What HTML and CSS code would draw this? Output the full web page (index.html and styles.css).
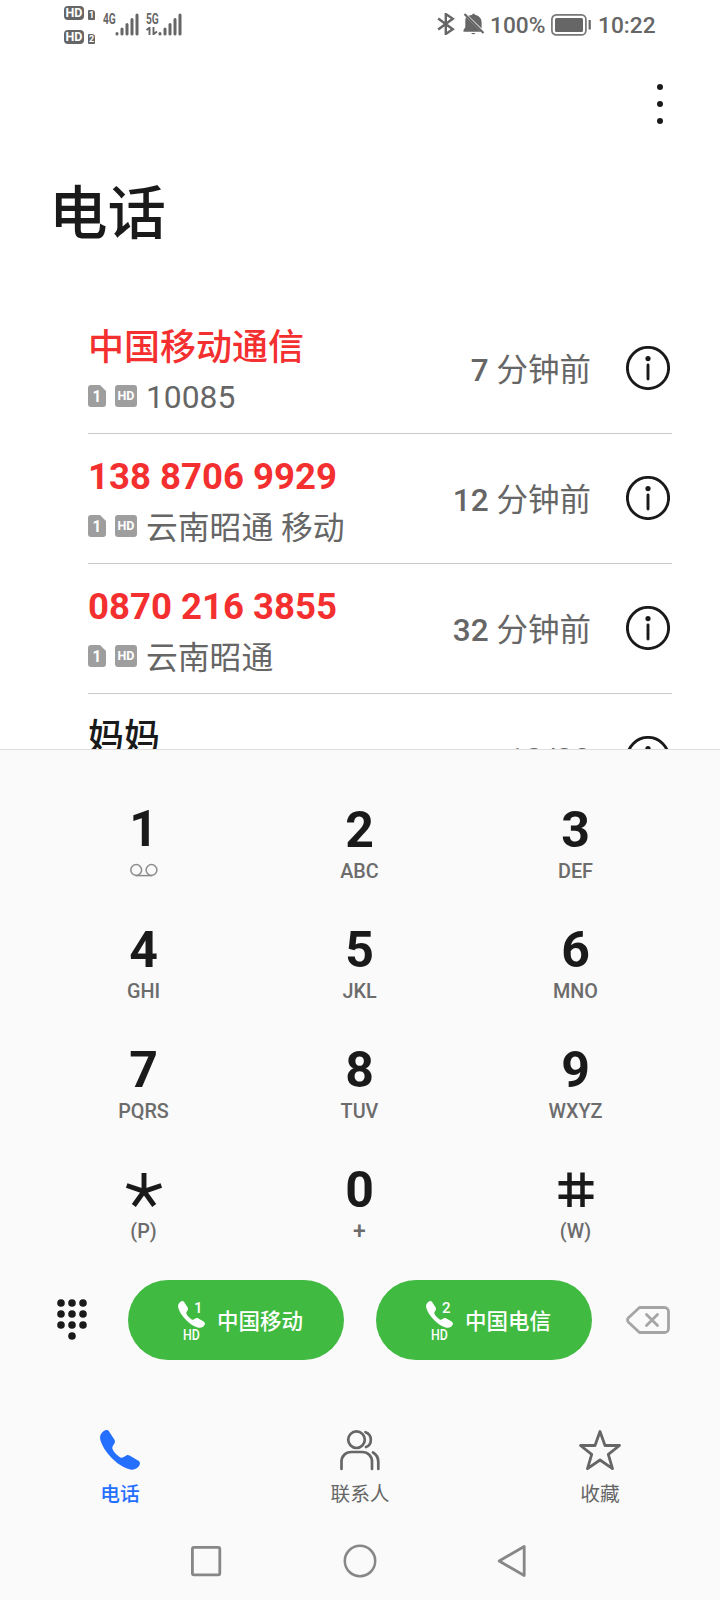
FILE: index.html
```html
<!DOCTYPE html>
<html lang="zh-CN">
<head>
<meta charset="utf-8">
<title>电话</title>
<link rel="stylesheet" href="styles.css">
</head>
<body>
<svg class="defs" width="0" height="0" aria-hidden="true">
  <symbol id="info" viewBox="0 0 44 44">
    <circle cx="22" cy="22" r="20.6" fill="none" stroke="#1a1a1a" stroke-width="2.9"/>
    <circle cx="22" cy="12.6" r="2.6" fill="#1a1a1a"/>
    <path d="M22 19v14" stroke="#1a1a1a" stroke-width="2.9" stroke-linecap="round"/>
  </symbol>
  <symbol id="handset" viewBox="0 0 40 40">
    <path d="M5.3.3C6.800-.2 8.200.2 9.100 1.500L14.300 9.600C15.300 11.100 15.100 12.500 14.100 14.100C12.800 16 11.900 17.200 12.500 19C13.900 22.200 17.600 26 20.900 27.700C22.400 28.100 24.400 26.300 26.400 25.400C27.500 24.900 28.500 25 29.600 25.600L38 30.500C39.700 31.500 40.300 33 39.700 34.800C38.300 38.300 34.300 40.300 30.300 39.500C16.800 36.300 3 21 .2 9.300C-.5 5.300 1.800 1.500 5.300.3Z"/>
  </symbol>
  <symbol id="bars" viewBox="0 0 24 24">
    <path d="M2 21.500v.500M7 17v5M12 12.500v9.500M17 7.500v14.500M22 3v19" stroke="#666" stroke-width="3" stroke-linecap="round"/>
  </symbol>
  <symbol id="sim" viewBox="0 0 18 22">
    <path d="M3 0H12L18 6V19a3 3 0 0 1-3 3H3a3 3 0 0 1-3-3V3a3 3 0 0 1 3-3Z" fill="#9e9e9e"/>
  </symbol>
</svg>
<div class="screen">
  <header class="status">
    <div class="status-left">
      <div class="hd-stack">
        <div class="hd-line"><span class="hd-badge">HD</span><span class="hd-num">1</span></div>
        <div class="hd-line"><span class="hd-badge">HD</span><span class="hd-num">2</span></div>
      </div>
      <div class="signal first"><span class="gen">4G</span><svg class="bars" width="24" height="24"><use href="#bars"/></svg></div>
      <div class="signal"><div class="gen-col"><span class="gen">5G</span><svg width="12" height="8" viewBox="0 0 12 8"><path d="M.5 3L3.500 .8V8M7.500 0V7.200L11 4.500" fill="none" stroke="#666" stroke-width="1.900"/></svg></div><svg class="bars" width="24" height="24"><use href="#bars"/></svg></div>
    </div>
    <div class="status-right">
      <svg class="bt" width="18" height="22" viewBox="0 0 18 22"><path d="M1.200 5.500L15.800 16.200L8.800 21V1L15.800 5.800L1.200 16.500" fill="none" stroke="#666" stroke-width="2.400"/></svg>
      <svg class="bell" width="22" height="22" viewBox="0 0 22 22"><path d="M5.500 2.800C6.800 2.200 8.300 2.100 9.300 1.700Q10.300-.5 12 1.700C16 2.700 18.600 5.300 18.600 9.300V15.600ZM3 4L18.200 18.800H.5V17L2.300 14.300V9.500C2.300 7.500 2.400 5.500 3 4ZM8 20H12.700Q10.300 22.500 8 20Z" fill="#666"/><path d="M1.500 1L20.500 20" stroke="#666" stroke-width="2.200"/></svg>
      <span class="pct">100%</span>
      <svg class="battery" width="40" height="22" viewBox="0 0 40 22"><rect x=".9" y=".9" width="34" height="20" rx="4.500" fill="#fff" stroke="#777" stroke-width="1.700"/><rect x="4" y="4" width="28" height="14" rx="1.500" fill="#666"/><path d="M38.700 6v9.500" stroke="#666" stroke-width="2.200"/></svg>
      <span class="clock">10:22</span>
    </div>
  </header>

  <div class="toolbar"><svg width="8" height="42" viewBox="0 0 8 42" fill="#1a1a1a"><circle cx="4" cy="4" r="3"/><circle cx="4" cy="21" r="3"/><circle cx="4" cy="38" r="3"/></svg></div>
  <h1 class="title">电话</h1>

  <main class="calls">
    <article class="call">
      <div class="who">
        <div class="name missed hanzi">中国移动通信</div>
        <div class="sub"><span class="sim"><svg width="18" height="22"><use href="#sim"/></svg><b>1</b></span><span class="hd">HD</span><span class="place number">10085</span></div>
      </div>
      <time class="when"><span class="count">7</span> 分钟前</time>
      <svg class="info" width="44" height="44"><use href="#info"/></svg>
    </article>
    <article class="call">
      <div class="who">
        <div class="name missed">138 8706 9929</div>
        <div class="sub"><span class="sim"><svg width="18" height="22"><use href="#sim"/></svg><b>1</b></span><span class="hd">HD</span><span class="place">云南昭通 移动</span></div>
      </div>
      <time class="when"><span class="count">12</span> 分钟前</time>
      <svg class="info" width="44" height="44"><use href="#info"/></svg>
    </article>
    <article class="call">
      <div class="who">
        <div class="name missed">0870 216 3855</div>
        <div class="sub"><span class="sim"><svg width="18" height="22"><use href="#sim"/></svg><b>1</b></span><span class="hd">HD</span><span class="place">云南昭通</span></div>
      </div>
      <time class="when"><span class="count">32</span> 分钟前</time>
      <svg class="info" width="44" height="44"><use href="#info"/></svg>
    </article>
    <article class="call">
      <div class="who"><div class="name hanzi">妈妈</div></div>
      <time class="when date">10/28</time>
      <svg class="info" width="44" height="44"><use href="#info"/></svg>
    </article>
  </main>

  <section class="panel">
    <div class="keys">
      <div class="key"><span class="digit one">1</span><svg class="voicemail" width="28" height="24" viewBox="0 0 28 24"><g fill="none" stroke="#8c8c8c" stroke-width="1.500"><circle cx="6.200" cy="11" r="5.400"/><circle cx="21.500" cy="11" r="5.400"/><path d="M5.500 16.600H22.200"/></g></svg></div>
      <div class="key"><span class="digit">2</span><span class="letters">ABC</span></div>
      <div class="key"><span class="digit">3</span><span class="letters">DEF</span></div>
      <div class="key"><span class="digit">4</span><span class="letters">GHI</span></div>
      <div class="key"><span class="digit">5</span><span class="letters">JKL</span></div>
      <div class="key"><span class="digit">6</span><span class="letters">MNO</span></div>
      <div class="key"><span class="digit">7</span><span class="letters">PQRS</span></div>
      <div class="key"><span class="digit">8</span><span class="letters">TUV</span></div>
      <div class="key"><span class="digit">9</span><span class="letters">WXYZ</span></div>
      <div class="key"><svg class="mark" width="40" height="59" viewBox="0 0 40 59"><path d="M20 13V31.500M2.700 25.500L20 31.300L37.300 25.500M9.800 45.500L20 31.300L30.200 45.500" fill="none" stroke="#1a1a1a" stroke-width="4.900"/></svg><span class="letters">(P)</span></div>
      <div class="key"><span class="digit">0</span><span class="letters plus">+</span></div>
      <div class="key"><svg class="mark" width="40" height="59" viewBox="0 0 40 59"><path d="M13.500 12.500V47M26.500 12.500V47M2.500 23.300H37.500M2.500 36.700H37.500" stroke="#1a1a1a" stroke-width="4.500"/></svg><span class="letters">(W)</span></div>
    </div>

    <div class="actions">
      <svg class="pad" width="30" height="41" viewBox="0 0 30 41" fill="#1a1a1a"><circle cx="4" cy="4" r="3.800"/><circle cx="15" cy="4" r="3.800"/><circle cx="26" cy="4" r="3.800"/><circle cx="4" cy="15" r="3.800"/><circle cx="15" cy="15" r="3.800"/><circle cx="26" cy="15" r="3.800"/><circle cx="4" cy="26" r="3.800"/><circle cx="15" cy="26" r="3.800"/><circle cx="26" cy="26" r="3.800"/><circle cx="15" cy="37" r="3.800"/></svg>
      <button class="dial"><span class="dial-icon"><svg width="27" height="27" fill="#fff"><use href="#handset"/></svg><i class="slot">1</i><i class="volte">HD</i></span><span class="carrier">中国移动</span></button>
      <button class="dial"><span class="dial-icon"><svg width="27" height="27" fill="#fff"><use href="#handset"/></svg><i class="slot">2</i><i class="volte">HD</i></span><span class="carrier">中国电信</span></button>
      <svg class="erase" width="44" height="28" viewBox="0 0 44 28" fill="none" stroke="#a5a5a5" stroke-width="2.800" stroke-linejoin="round" stroke-linecap="round"><path d="M13.500 1.500H38.500a4 4 0 0 1 4 4V22.500a4 4 0 0 1-4 4H13.500L2.500 16.200Q.5 14 2.500 11.800Z"/><path d="M20.500 8.500L31.500 19.500M31.500 8.500L20.500 19.500"/></svg>
    </div>

    <nav class="tabs">
      <div class="tab active"><svg width="40" height="40" fill="#256fff"><use href="#handset"/></svg><span>电话</span></div>
      <div class="tab"><svg width="42" height="42" viewBox="0 0 42 42" fill="none" stroke="#666" stroke-width="2.700" stroke-linecap="round"><circle cx="17.500" cy="9.700" r="8.300"/><path d="M26.500 2.200C33.500 4.500 33.500 14.800 27 17M2.500 39V32C2.500 26 6.500 22 12.500 22H23C29 22 33 26 33 32V39M34 22.500C37.500 24.500 39.300 28 39.300 32V39"/></svg><span>联系人</span></div>
      <div class="tab"><svg width="42" height="42" viewBox="0 0 42 42" fill="none" stroke="#666" stroke-width="2.800" stroke-linejoin="round"><path d="M21 1.500L26 15.500H40.500L29.300 24.300L33.500 38.700L21 30L8.500 38.700L12.700 24.300L1.500 15.500H16Z"/></svg><span>收藏</span></div>
    </nav>

    <footer class="sysnav">
      <svg width="34" height="34" viewBox="0 0 34 34"><rect x="3.400" y="3.400" width="27.400" height="27.400" rx="1.500" fill="none" stroke="#878787" stroke-width="2.800"/></svg>
      <svg width="34" height="34" viewBox="0 0 34 34"><circle cx="17" cy="17" r="15.200" fill="none" stroke="#878787" stroke-width="2.500"/></svg>
      <svg width="34" height="34" viewBox="0 0 34 34"><path d="M27.200 2.500V31.500L2.200 17Z" fill="none" stroke="#878787" stroke-width="2.800" stroke-linejoin="round"/></svg>
    </footer>
  </section>
</div>
</body>
</html>
```

FILE: styles.css
```css
* { box-sizing: border-box; }
body {
  margin: 0;
  background: #fff;
  color: #1a1a1a;
  font-family: Roboto, "Noto Sans CJK SC", sans-serif;
}
svg { display: block; flex: none; }
.defs { position: absolute; }
.screen {
  width: 720px;
  height: 1600px;
  display: flex;
  flex-direction: column;
  overflow: hidden;
}

.status {
  height: 50px;
  display: flex;
  justify-content: space-between;
  padding: 0 64px;
  color: #666;
}
.status-left { display: flex; padding-top: 6px; }
.hd-stack { display: flex; flex-direction: column; gap: 10px; width: 39px; }
.hd-line { display: flex; gap: 4px; align-items: flex-end; height: 14px; }
.hd-badge {
  width: 20px;
  height: 14px;
  border-radius: 4px;
  background: #666;
  color: #fff;
  font: 700 12.5px/14px Roboto, sans-serif;
  text-align: center;
}
.hd-num {
  width: 7px;
  height: 10px;
  border-radius: 1px 3px 1px 1px;
  background: #666;
  color: #fff;
  font: 700 9px/10px Roboto, sans-serif;
  text-align: center;
}
.signal { display: flex; padding-top: 6px; }
.signal.first { width: 43px; }
.gen {
  display: block;
  width: 12px;
  font: 700 15px/14px Roboto, sans-serif;
  transform: scaleX(.68);
  transform-origin: 0 0;
}
.gen-col { display: flex; flex-direction: column; gap: 1px; }
.status-right {
  display: flex;
  align-items: flex-start;
  padding-top: 13px;
  font-weight: 500;
  font-size: 22.7px;
  line-height: 25px;
}
.bell { margin-left: 8px; }
.pct { width: 66px; padding-left: 5px; }
.battery { margin-top: 1px; }
.clock { width: 57px; margin-left: 8px; text-indent: -1px; }

.toolbar { height: 110px; display: flex; justify-content: flex-end; padding: 33px 56px 0 0; }
.title { margin: 0; height: 143px; padding: 21px 0 0 49px; font-size: 58.5px; line-height: 66px; font-weight: 500; }

.calls { height: 446px; overflow: hidden; padding: 0 48px 0 88px; }
.call { height: 130px; display: flex; align-items: flex-start; }
.call + .call { box-shadow: inset 0 1px #c9c9c9; }
.who { flex: 1; padding-top: 22px; }
.name { height: 44px; font-size: 36.6px; line-height: 44px; font-weight: 500; }
.missed { color: #f42f30; font-weight: 700; }
.hanzi { padding-top: 1px; font-size: 36px; font-weight: 500; }
.sub { display: flex; align-items: flex-start; margin-top: 8px; height: 40px; color: #666; font-size: 31.8px; line-height: 40px; }
.place { padding-top: 1px; }
.place.number { padding-top: 0; }
.sim { position: relative; width: 18px; margin: 8px 9px 0 0; }
.sim b { position: absolute; inset: 0; color: #fff; font-size: 17px; line-height: 22px; text-align: center; transform: scaleX(.9); }
.hd {
  width: 22px;
  height: 22px;
  margin: 8px 9px 0 0;
  border-radius: 3px;
  background: #9e9e9e;
  color: #fff;
  font: 700 12.5px/22px Roboto, sans-serif;
  text-align: center;
}
.when { padding-top: 48px; color: #666; font-size: 31.5px; line-height: 40px; }
.when.date { padding-top: 47px; }
.count { font-weight: 500; }
.info { margin: 43px 2px 0 35px; }

.panel { flex: 1; background: #fafafa; border-top: 1px solid #dedede; }
.keys { display: grid; grid-template-columns: repeat(3, 216px); grid-auto-rows: 120px; padding: 50px 36px 0; }
.key { display: flex; flex-direction: column; align-items: center; }
.digit { height: 59px; margin-right: 1px; font-size: 50px; line-height: 60px; font-weight: 700; }
.one { line-height: 58px; }
.letters { margin-right: 1px; font-size: 19.8px; line-height: 26px; font-weight: 500; color: #6c6c6c; }
.plus { font-size: 23px; line-height: 25px; }
.actions { display: flex; align-items: flex-start; padding: 0 50px 0 57px; height: 150px; }
.pad { margin-top: 19px; }
.dial {
  width: 216px;
  height: 80px;
  margin-left: 32px;
  padding: 0 0 0 50px;
  border: 0;
  border-radius: 40px;
  background: #41ba41;
  color: #fff;
  display: flex;
  align-items: center;
  font: 500 21.5px/30px Roboto, "Noto Sans CJK SC", sans-serif;
  white-space: nowrap;
}
.pad + .dial { margin-left: 41px; }
.carrier { padding-top: 3px; }
.dial-icon { position: relative; width: 39px; height: 38px; flex: none; }
.slot, .volte { position: absolute; font-style: normal; font-weight: 500; }
.slot { left: 16px; top: 1px; font-size: 15px; line-height: 12px; }
.volte { left: 5px; top: 28px; font-size: 14px; line-height: 13px; transform: scaleX(.88); transform-origin: 0 0; }
.erase { margin: 26px 0 0 34px; }
.tabs { display: grid; grid-template-columns: repeat(3, 240px); height: 110px; }
.tab { display: flex; flex-direction: column; align-items: center; color: #666; font-size: 19.7px; line-height: 28px; }
.tab svg { height: 42px; }
.tab span { margin-top: 9px; }
.tab.active { color: #256fff; font-weight: 500; }
.tab.active svg { height: 40px; margin-bottom: 2px; }
.sysnav { display: flex; justify-content: center; gap: 120px; padding-top: 4px; }
```
